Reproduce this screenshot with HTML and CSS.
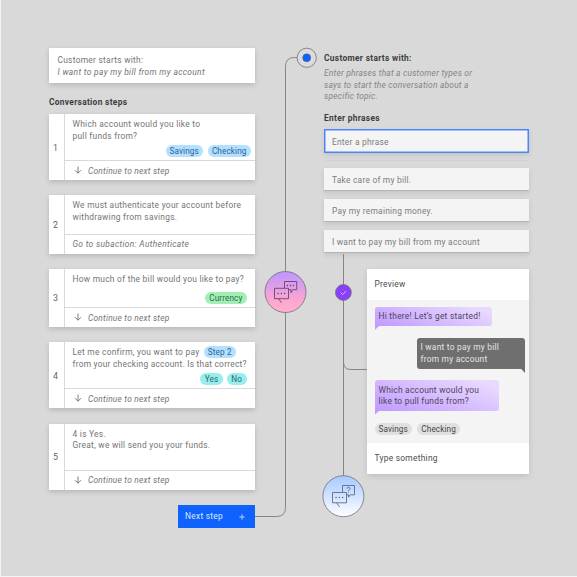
FILE: index.html
```html
<!DOCTYPE html>
<html lang="en">
<head>
<meta charset="utf-8">
<title>Conversation builder</title>
<link rel="stylesheet" href="styles.css">
</head>
<body>
<main class="canvas">
  <section class="steps">
    <div class="card start">
      <p>Customer starts with:</p>
      <p><em class="wide">I want to pay my bill from my account</em></p>
    </div>
    <h2 class="heading">Conversation steps</h2>

    <article class="card step tall">
      <div class="num">1</div>
      <div class="body">
        <div class="msg"><p>Which account would you like to<br>pull funds from?</p>
          <div class="tags near"><span class="tag blue">Savings</span><span class="tag blue">Checking</span></div></div>
        <div class="next"><svg class="arrow" viewBox="0 0 8 8"><path d="M4 .5v6.700M1 4.200l3 3 3-3"/></svg><em>Continue to next step</em></div>
      </div>
    </article>

    <article class="card step">
      <div class="num">2</div>
      <div class="body">
        <div class="msg"><p>We must authenticate your account before<br>withdrawing from savings.</p></div>
        <div class="next"><em class="wide">Go to subaction: Authenticate</em></div>
      </div>
    </article>

    <article class="card step">
      <div class="num">3</div>
      <div class="body">
        <div class="msg"><p>How much of the bill would you like to pay?</p>
          <div class="tags"><span class="tag green">Currency</span></div></div>
        <div class="next"><svg class="arrow" viewBox="0 0 8 8"><path d="M4 .5v6.700M1 4.200l3 3 3-3"/></svg><em>Continue to next step</em></div>
      </div>
    </article>

    <article class="card step tall">
      <div class="num">4</div>
      <div class="body">
        <div class="msg"><p>Let me confirm, you want to pay <span class="tag blue inline">Step 2</span><br><span class="snug">from your checking account. Is that correct?</span></p>
          <div class="tags"><span class="tag teal">Yes</span><span class="tag teal">No</span></div></div>
        <div class="next"><svg class="arrow" viewBox="0 0 8 8"><path d="M4 .5v6.700M1 4.200l3 3 3-3"/></svg><em>Continue to next step</em></div>
      </div>
    </article>

    <article class="card step tall last">
      <div class="num">5</div>
      <div class="body">
        <div class="msg"><p>4 is Yes.<br>Great, we will send you your funds.</p></div>
        <div class="next"><svg class="arrow" viewBox="0 0 8 8"><path d="M4 .5v6.700M1 4.200l3 3 3-3"/></svg><em>Continue to next step</em></div>
      </div>
    </article>

    <button class="add" type="button"><span>Next step</span><svg viewBox="0 0 6 6"><path d="M3 .3v5.400M.3 3h5.400"/></svg></button>
  </section>

  <section class="phrases">
    <h2 class="heading">Customer starts with:</h2>
    <p class="hint"><em>Enter phrases that a customer types or<br>says to start the conversation about a<br>specific topic.</em></p>
    <h2 class="heading second">Enter phrases</h2>
    <div class="field active">Enter a phrase</div>
    <div class="rule"></div>
    <div class="field">Take care of my bill.</div>
    <div class="field">Pay my remaining money.</div>
    <div class="field">I want to pay my bill from my account</div>

    <div class="preview">
      <header>Preview</header>
      <div class="chat">
        <div class="bubble bot one">Hi there! Let’s get started!</div>
        <div class="bubble user">I want to pay my bill<br>from my account</div>
        <div class="bubble bot two">Which account would you<br>like to pull funds from?</div>
        <div class="choices"><span class="tag gray">Savings</span><span class="tag gray">Checking</span></div>
      </div>
      <footer>Type something</footer>
    </div>
  </section>

  <svg class="connectors" viewBox="0 0 577 577">
    <defs>
      <linearGradient id="pink" x1="0" y1="0" x2="0" y2="1"><stop offset="0" stop-color="#be95ff"/><stop offset=".75" stop-color="#ffa8cd"/><stop offset="1" stop-color="#ffafd2"/></linearGradient>
      <linearGradient id="sky" x1="0" y1="0" x2="0" y2="1"><stop offset="0" stop-color="#a6c8ff"/><stop offset="1" stop-color="#ffffff"/></linearGradient>
    </defs>
    <g class="wire">
      <path d="M297 57.500h-2.500q-9 0-9 9V507.500q0 9-9 9H255"/>
      <path d="M343.500 254V476M343.500 362q0 7.500 7.500 7.500h16"/>
    </g>
    <circle class="ring" cx="306.700" cy="57.800" r="9.600" fill="#dcdcdc"/>
    <circle cx="306.700" cy="57.800" r="4" fill="#0f62fe" stroke="#57647d" stroke-width=".6"/>
    <circle class="ring" cx="285.500" cy="292" r="20.500" fill="url(#pink)"/>
    <circle class="ring" cx="343.400" cy="292.500" r="7.900" fill="#8a3ffc"/>
    <path d="M340.700 292.700l1.900 1.900 3.700-3.700" fill="none" stroke="#e8daff" stroke-width=".8"/>
    <circle class="ring" cx="343.400" cy="496.200" r="20.500" fill="url(#sky)"/>
    <g class="glyph">
      <path d="M284.500 288v-6.500h12.200v8.200h-4l-1.700 3v-3h-2.200"/>
      <path d="M274.500 288.300h14v10.400h-14zM278.500 298.700l3 4"/>
      <path class="dots" d="M287.300 285.500h.1M290.300 285.500h.1M293.300 285.500h.1M278 293.500h.1M281.300 293.500h.1M284.600 293.500h.1"/>
    </g>
    <g class="glyph cool">
      <path d="M342.500 492v-6.500h12v9.300h-4.300l-1.700 2.400v-2.400h-2"/>
      <path d="M332.500 492.500h14v10.300h-14zM336.500 502.800l3 4"/>
      <path d="M347 488.700q0-1.400 1.500-1.400t1.500 1.400q0 .8-1.500 1.700v1M348.500 492.500v.6"/>
      <path class="dots" d="M336 497.500h.1M339.300 497.500h.1M342.600 497.500h.1"/>
    </g>
  </svg>
</main>
</body>
</html>
```

FILE: styles.css
```css
* { box-sizing: border-box; }
body { margin: 0; background: #f4f4f4; font-family: Roboto, "Open Sans", sans-serif; font-size: 8.4px; line-height: 11.7px; color: #747474; letter-spacing: .27px; }
p, h2 { margin: 0; white-space: nowrap; }
em { letter-spacing: .22px; }
.wide { letter-spacing: .33px; }
.snug { letter-spacing: .24px; }
.canvas { position: relative; width: 576px; height: 576px; margin-left: 1px; background: #d9d9d9; display: flex; padding: 48px 48px 0 48px; justify-content: space-between; overflow: hidden; }
.steps, .phrases { width: 205.500px; display: flex; flex-direction: column; }
.phrases { width: 205px; }
.card { background: #fff; box-shadow: 0 2px 5px rgba(0,0,0,.16); }
.start { height: 35px; padding: 7px 8.500px; flex: none; }
.heading { font-size: 8.400px; line-height: 12px; font-weight: 700; color: #3d3d3d; letter-spacing: .31px; }
.steps .heading { margin: 13px 0 6px; }
.step { display: flex; height: 58.500px; margin-bottom: 15px; flex: none; }
.step.tall { height: 66px; }
.step.last { margin: .6px 0 15.400px; }
.num { width: 16px; border-right: 1px solid #d9d9d9; display: flex; align-items: center; padding: 3px 0 0 4px; color: #5f5f5f; font-size: 8.800px; }
.body { flex: 1; display: flex; flex-direction: column; min-width: 0; }
.msg { flex: 1; padding: 5px 8px 3px 7.500px; display: flex; flex-direction: column; justify-content: space-between; }
.next { height: 20px; border-top: 1px solid #d9d9d9; display: flex; align-items: center; padding: 2px 0 0 7.500px; white-space: nowrap; }
.arrow { width: 8px; height: 8px; margin: 0 6.500px 3px 1px; fill: none; stroke: #6f6f6f; stroke-width: .9; }
.tags { display: flex; justify-content: flex-end; gap: 4px; }
.tags.near { margin-right: -4px; gap: 5px; }
.tag { height: 12px; line-height: 12px; border-radius: 6px; padding: 0 4px; font-size: 8.200px; letter-spacing: .11px; }
.blue { background: #b3e0ff; color: #2a6396; }
.green { background: #a0efb4; color: #35684a; }
.teal { background: #97eeee; color: #2c6a6b; padding: 0 4.500px; }
.teal + .teal { margin-right: 0; }
.inline { display: inline-block; margin: -1px 0 -3px 2px; vertical-align: baseline; }
.add { align-self: flex-end; width: 77px; height: 23px; border: 0; background: #0f62fe; color: #dce8ff; font: inherit; letter-spacing: inherit; display: flex; align-items: center; justify-content: space-between; padding: 1px 10px 0 7.500px; }
.add svg { width: 6px; height: 6px; stroke: #dce8ff; stroke-width: .8; }
.phrases .heading { margin-top: 3.500px; }
.hint { margin-top: 4.500px; color: #858585; }
.phrases .second { margin-top: 8.500px; }
.field { height: 23px; flex: none; background: #f4f4f4; border-bottom: 1px solid #b5b5b5; padding: 3px 8px 0; display: flex; align-items: center; margin-bottom: 8px; white-space: nowrap; box-shadow: 0 2px 5px rgba(0,0,0,.1); color: #7c7c7c; letter-spacing: .24px; }
.field.active { border: 0; height: 24px; margin: 5.500px 0 7px; box-shadow: inset 0 0 0 1.500px #4a86fa, 0 2px 5px rgba(0,0,0,.1); }
.rule { height: 1px; background: #d0d0d0; margin-bottom: 7px; flex: none; }
.preview { align-self: flex-end; width: 162.500px; height: 205px; flex: none; margin-top: 7.500px; background: #fff; box-shadow: 0 2px 6px rgba(0,0,0,.12); display: flex; flex-direction: column; color: #4d4d4d; }
.preview header, .preview footer { height: 31px; display: flex; align-items: center; padding: 1px 8px 0; }
.chat { flex: 1; background: #f4f4f4; padding: 7.500px 4px 0 8px; display: flex; flex-direction: column; align-items: flex-start; letter-spacing: .24px; }
.bubble { position: relative; border-radius: 3px; padding: 4.200px 4px 3.400px; white-space: nowrap; color: #4e455c; }
.bubble::after { content: ""; position: absolute; bottom: -4px; width: 4px; height: 6px; }
.bot { background: linear-gradient(20deg, #c09aff, #e8daff 90%); border-bottom-left-radius: 0; }
.bot::after { left: 0; background: #c09aff; clip-path: polygon(0 0, 100% 0, 100% 33%, 0 100%); }
.one { width: 117px; }
.user { width: 108.500px; align-self: flex-end; background: #6f6f6f; color: #e4e4e4; margin: 11.500px 0; border-bottom-right-radius: 0; }
.user::after { right: 0; background: #6f6f6f; clip-path: polygon(0 0, 100% 0, 100% 100%, 0 33%); }
.two { width: 124px; }
.choices { display: flex; gap: 5.500px; margin-top: 12px; }
.gray { background: #e0e0e0; color: #474747; }
.connectors { position: absolute; left: -1px; top: 0; width: 577px; height: 577px; pointer-events: none; }
.wire { fill: none; stroke: #858585; stroke-width: 1; }
.ring { stroke: #706f78; stroke-width: .8; }
.glyph { fill: none; stroke: #5c3766; stroke-width: .8; }
.cool { stroke: #4b5d7d; }
.dots { stroke-width: 1.300; stroke-linecap: round; }
```
